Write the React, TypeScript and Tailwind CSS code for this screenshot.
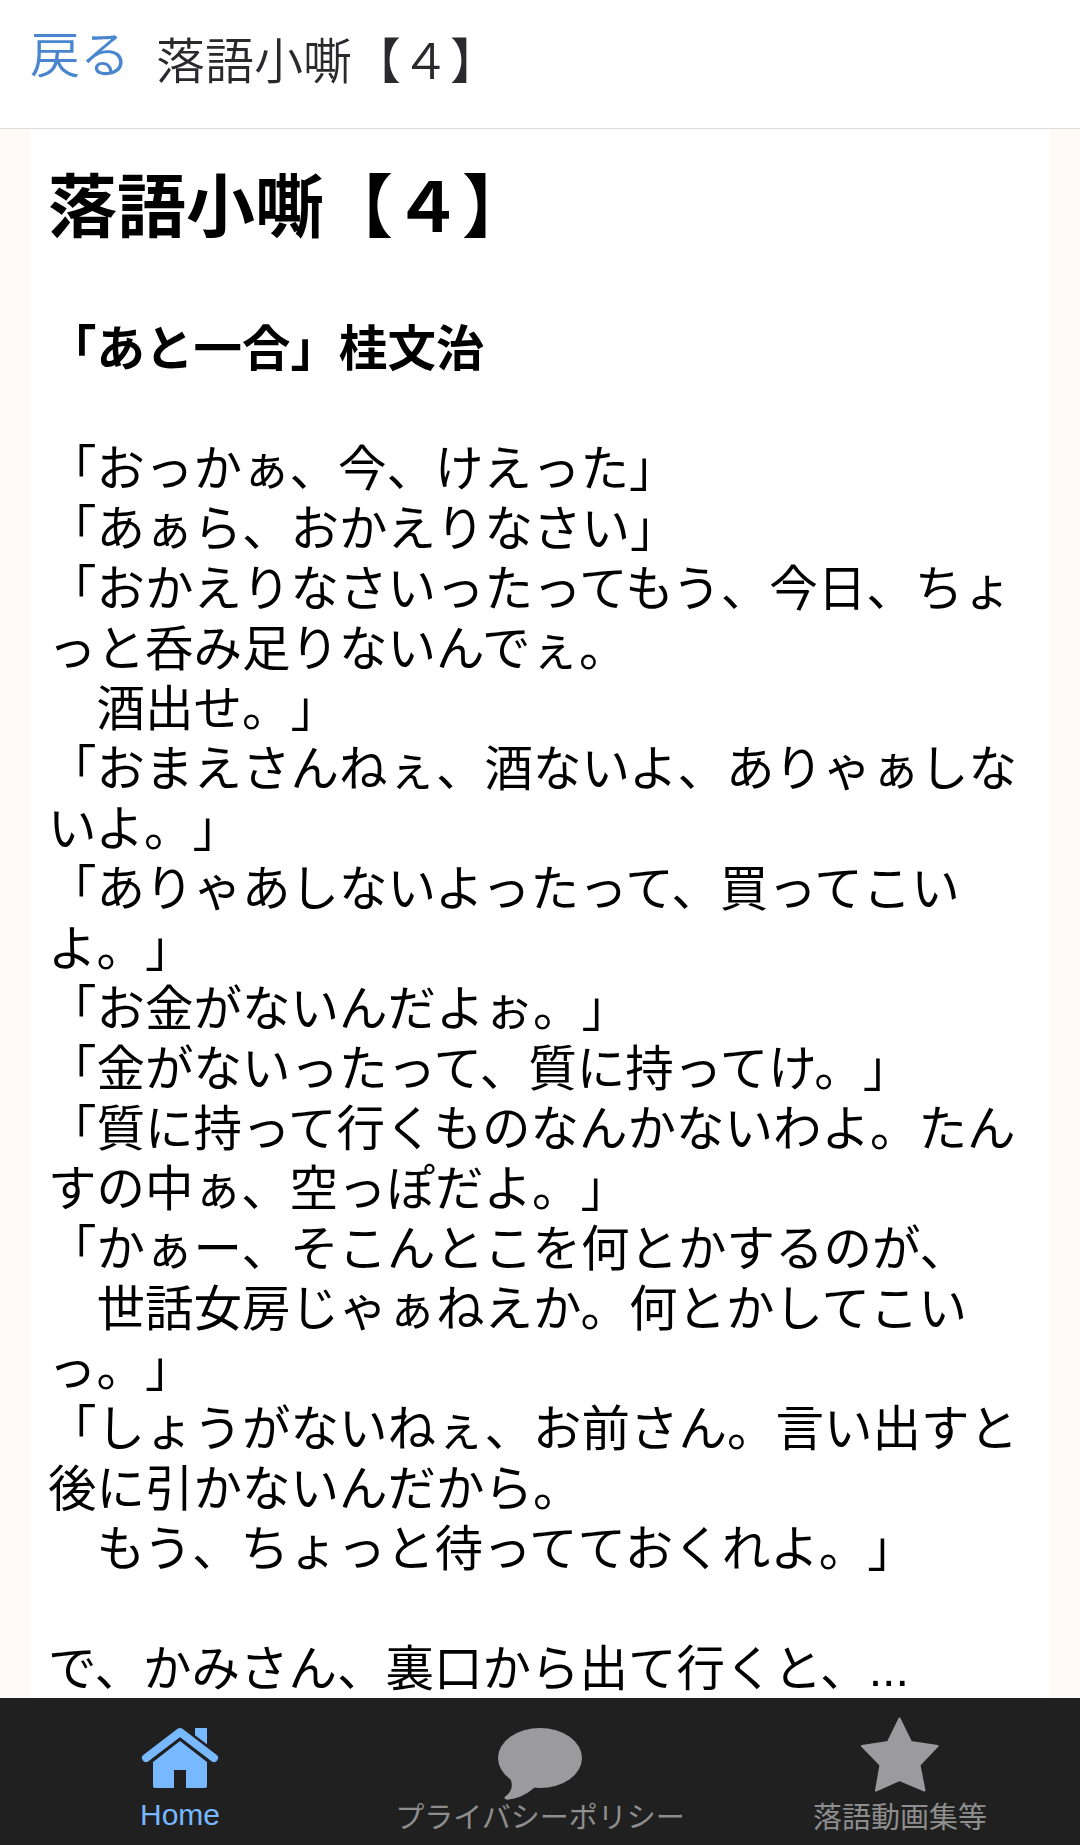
import React from 'react';

const lines = `「おっかぁ、今、けえった」
「あぁら、おかえりなさい」
「おかえりなさいったってもう、今日、ちょっと呑み足りないんでぇ。
　酒出せ。」
「おまえさんねぇ、酒ないよ、ありゃぁしないよ。」
「ありゃあしないよったって、買ってこいよ。」
「お金がないんだよぉ。」
「金がないったって、質に持ってけ。」
「質に持って行くものなんかないわよ。たんすの中ぁ、空っぽだよ。」
「かぁー、そこんとこを何とかするのが、
　世話女房じゃぁねえか。何とかしてこいっ。」
「しょうがないねぇ、お前さん。言い出すと後に引かないんだから。
　もう、ちょっと待っててておくれよ。」

で、かみさん、裏口から出て行くと、`.replace('待っててて', '待ってて');

const font = "font-['Noto_Sans_CJK_JP','Liberation_Sans',sans-serif]";

function HomeIcon() {
    return (
        <svg viewBox="30 12 100 90" className="w-[100px] h-[90px]">
            <rect x="95" y="28" width="12" height="22" fill="#78b8ff" />
            <path d="M46 58 L80 32 L114 58" fill="none" stroke="#202020" strokeWidth="13" strokeLinecap="butt" />
            <path d="M46 58 L80 32 L114 58" fill="none" stroke="#78b8ff" strokeWidth="8" strokeLinecap="round" strokeLinejoin="round" />
            <path d="M53 62 L80 41 L107 62 V86 a2 2 0 0 1 -2 2 H86 V70 H74 V88 H55 a2 2 0 0 1 -2 -2 Z" fill="#78b8ff" />
        </svg>
    );
}

function BubbleIcon() {
    return (
        <svg viewBox="110 12 100 90" className="w-[100px] h-[90px]">
            <ellipse cx="160" cy="58" rx="42" ry="30" fill="#9b9a9d" />
            <path d="M130 78 C134 86 131 93 124.5 97 C124 99 126 100 129 99.5 C140 98 149 93 156 86 Z" fill="#9b9a9d" />
        </svg>
    );
}

function StarIcon() {
    return (
        <svg viewBox="70 12 100 90" className="w-[100px] h-[90px]">
            <path
                d="M119.5 18.5 L131 42 L157.5 46 L139.5 65 L144.5 90.5 L119.5 80 L96 90.5 L100.5 65 L82 46 L108 42 Z"
                fill="#9b9a9d"
                stroke="#9b9a9d"
                strokeWidth="2"
                strokeLinejoin="round"
            />
        </svg>
    );
}

export default function App() {
    return (
        <div lang="ja" className={`flex flex-col h-screen overflow-hidden bg-[#fffaf5] [text-spacing-trim:space-all] ${font}`}>
            {/* Header */}
            <div className="h-[129px] shrink-0 bg-white border-b border-[#dcdcdc] flex pl-[30px]">
                <span className="text-[#4a86cf] text-[50px] leading-[102px] font-[350]">戻る</span>
                <span className="ml-[26px] text-[#2a2a2e] text-[49px] leading-[116px] font-[350]">落語小嘶【４】</span>
            </div>

            {/* Body */}
            <div className="flex-1 overflow-hidden mx-[30px] bg-white pl-[18px] pr-[20px] text-black">
                <h1 className="mt-[33px] text-[69px] leading-[80px] font-bold">落語小嘶【４】</h1>
                <h3 className="mt-[73px] text-[48.5px] leading-[60px] font-bold">「あと一合」桂文治</h3>
                <p className="mt-[60px] text-[48.5px] leading-[60px] whitespace-pre-wrap [line-break:loose]">
                    {lines}
                    <span className="font-['Liberation_Sans']">...</span>
                </p>
            </div>

            {/* Tab bar */}
            <div className="h-[147px] shrink-0 bg-[#202020] grid grid-cols-3 pt-[14px]">
                <div className="flex flex-col items-center">
                    <HomeIcon />
                    <span className="-mt-[5px] font-['Liberation_Sans'] text-[30px] leading-[36px] text-[#78b8ff]">Home</span>
                </div>
                <div className="flex flex-col items-center">
                    <BubbleIcon />
                    <span className="-mt-[5px] text-[29px] leading-[36px] text-[#8e8e8e]">プライバシーポリシー</span>
                </div>
                <div className="flex flex-col items-center">
                    <StarIcon />
                    <span className="-mt-[5px] text-[29px] leading-[36px] text-[#8e8e8e]">落語動画集等</span>
                </div>
            </div>
        </div>
    );
}
